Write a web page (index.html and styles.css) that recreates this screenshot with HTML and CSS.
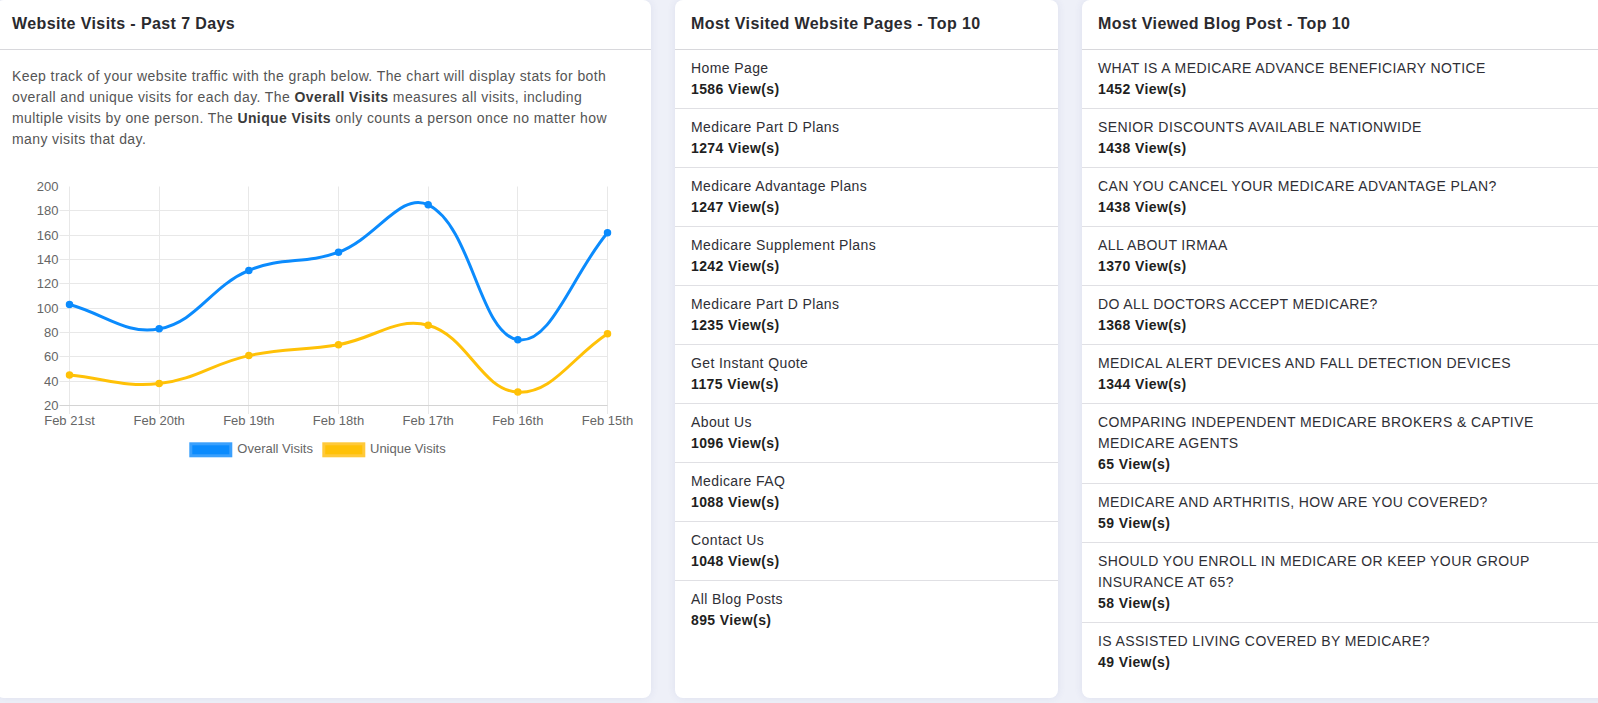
FILE: index.html
```html
<!DOCTYPE html>
<html lang="en">
<head>
<meta charset="utf-8">
<title>Website Stats</title>
<link rel="stylesheet" href="styles.css">
</head>
<body>
<div class="dashboard">
  <section class="card card-visits">
    <header class="card-head"><h2>Website Visits - Past 7 Days</h2></header>
    <div class="card-body">
      <p class="intro">Keep track of your website traffic with the graph below. The chart will display stats for both overall and unique visits for each day. The <strong>Overall Visits</strong> measures all visits, including multiple visits by one person. The <strong>Unique Visits</strong> only counts a person once no matter how many visits that day.</p>
      <svg class="chart" viewBox="0 0 623 310" width="623" height="310" data-overall="103,83,131,146,185,74,162" data-unique="45,38,61,70,86,31,79">
        <g class="grid">
          <line x1="47.5" y1="50.5" x2="595.5" y2="50.5"/>
          <line x1="47.5" y1="75.5" x2="595.5" y2="75.5"/>
          <line x1="47.5" y1="99.5" x2="595.5" y2="99.5"/>
          <line x1="47.5" y1="123.5" x2="595.5" y2="123.5"/>
          <line x1="47.5" y1="148.5" x2="595.5" y2="148.5"/>
          <line x1="47.5" y1="172.5" x2="595.5" y2="172.5"/>
          <line x1="47.5" y1="196.5" x2="595.5" y2="196.5"/>
          <line x1="47.5" y1="221.5" x2="595.5" y2="221.5"/>
          <line x1="57.5" y1="26.5" x2="57.5" y2="254"/>
          <line x1="147.5" y1="26.5" x2="147.5" y2="254"/>
          <line x1="236.5" y1="26.5" x2="236.5" y2="254"/>
          <line x1="326.5" y1="26.5" x2="326.5" y2="254"/>
          <line x1="416.5" y1="26.5" x2="416.5" y2="254"/>
          <line x1="505.5" y1="26.5" x2="505.5" y2="254"/>
          <line x1="595.5" y1="26.5" x2="595.5" y2="254"/>
        </g>
        <line class="axis" x1="47.5" y1="245.5" x2="595.5" y2="245.5"/>
        <g class="tick-label" text-anchor="end">
          <text x="46.5" y="31">200</text>
          <text x="46.5" y="55">180</text>
          <text x="46.5" y="80">160</text>
          <text x="46.5" y="104">140</text>
          <text x="46.5" y="128">120</text>
          <text x="46.5" y="153">100</text>
          <text x="46.5" y="177">80</text>
          <text x="46.5" y="201">60</text>
          <text x="46.5" y="226">40</text>
          <text x="46.5" y="250">20</text>
        </g>
        <g class="tick-label" text-anchor="middle">
          <text x="57.5" y="265">Feb 21st</text>
          <text x="147.2" y="265">Feb 20th</text>
          <text x="236.8" y="265">Feb 19th</text>
          <text x="326.5" y="265">Feb 18th</text>
          <text x="416.2" y="265">Feb 17th</text>
          <text x="505.8" y="265">Feb 16th</text>
          <text x="595.5" y="265">Feb 15th</text>
        </g>
        <path class="series series-unique" data-key="unique" d=""/>
        <g class="dots dots-unique"></g>
        <path class="series series-overall" data-key="overall" d=""/>
        <g class="dots dots-overall"></g>
        <g class="legend">
          <rect class="swatch swatch-overall" x="178.8" y="283.8" width="40" height="12"/>
          <text class="tick-label" x="225.3" y="293.3">Overall Visits</text>
          <rect class="swatch swatch-unique" x="311.8" y="283.8" width="40" height="12"/>
          <text class="tick-label" x="358" y="293.3">Unique Visits</text>
        </g>
      </svg>
    </div>
  </section>

  <section class="card card-pages">
    <header class="card-head"><h2>Most Visited Website Pages - Top 10</h2></header>
    <ul class="stat-list">
      <li><span class="stat-name">Home Page</span><span class="stat-views">1586 View(s)</span></li>
      <li><span class="stat-name">Medicare Part D Plans</span><span class="stat-views">1274 View(s)</span></li>
      <li><span class="stat-name">Medicare Advantage Plans</span><span class="stat-views">1247 View(s)</span></li>
      <li><span class="stat-name">Medicare Supplement Plans</span><span class="stat-views">1242 View(s)</span></li>
      <li><span class="stat-name">Medicare Part D Plans</span><span class="stat-views">1235 View(s)</span></li>
      <li><span class="stat-name">Get Instant Quote</span><span class="stat-views">1175 View(s)</span></li>
      <li><span class="stat-name">About Us</span><span class="stat-views">1096 View(s)</span></li>
      <li><span class="stat-name">Medicare FAQ</span><span class="stat-views">1088 View(s)</span></li>
      <li><span class="stat-name">Contact Us</span><span class="stat-views">1048 View(s)</span></li>
      <li><span class="stat-name">All Blog Posts</span><span class="stat-views">895 View(s)</span></li>
    </ul>
  </section>

  <section class="card card-blog">
    <header class="card-head"><h2>Most Viewed Blog Post - Top 10</h2></header>
    <ul class="stat-list">
      <li><span class="stat-name">WHAT IS A MEDICARE ADVANCE BENEFICIARY NOTICE</span><span class="stat-views">1452 View(s)</span></li>
      <li><span class="stat-name">SENIOR DISCOUNTS AVAILABLE NATIONWIDE</span><span class="stat-views">1438 View(s)</span></li>
      <li><span class="stat-name">CAN YOU CANCEL YOUR MEDICARE ADVANTAGE PLAN?</span><span class="stat-views">1438 View(s)</span></li>
      <li><span class="stat-name">ALL ABOUT IRMAA</span><span class="stat-views">1370 View(s)</span></li>
      <li><span class="stat-name">DO ALL DOCTORS ACCEPT MEDICARE?</span><span class="stat-views">1368 View(s)</span></li>
      <li><span class="stat-name">MEDICAL ALERT DEVICES AND FALL DETECTION DEVICES</span><span class="stat-views">1344 View(s)</span></li>
      <li><span class="stat-name">COMPARING INDEPENDENT MEDICARE BROKERS &amp; CAPTIVE MEDICARE AGENTS</span><span class="stat-views">65 View(s)</span></li>
      <li><span class="stat-name">MEDICARE AND ARTHRITIS, HOW ARE YOU COVERED?</span><span class="stat-views">59 View(s)</span></li>
      <li><span class="stat-name">SHOULD YOU ENROLL IN MEDICARE OR KEEP YOUR GROUP INSURANCE AT 65?</span><span class="stat-views">58 View(s)</span></li>
      <li><span class="stat-name">IS ASSISTED LIVING COVERED BY MEDICARE?</span><span class="stat-views">49 View(s)</span></li>
    </ul>
  </section>
</div>
<script src="script.js"></script>
</body>
</html>
```

FILE: styles.css
```css
* {
  box-sizing: border-box;
}

html,
body {
  margin: 0;
  padding: 0;
}

body {
  width: 1598px;
  height: 703px;
  overflow: hidden;
  background: #eef0f8;
  font-family: "Liberation Sans", Arial, sans-serif;
  letter-spacing: 0.025em;
  color: #333;
}

.dashboard {
  display: flex;
  align-items: stretch;
  gap: 24px;
  height: 698px;
  margin-left: -4px;
}

.card {
  flex: none;
  background: #fff;
  border-radius: 8px;
  box-shadow: 0 0 8px rgba(60, 70, 140, 0.09);
  overflow: hidden;
}

.card-visits {
  width: 655px;
}

.card-pages {
  width: 383px;
}

.card-blog {
  width: 536px;
}

.card-head {
  padding: 12px 16px 13px;
  border-bottom: 1px solid #d8d8dc;
}

.card-head h2 {
  margin: 0;
  font-size: 16px;
  line-height: 24px;
  font-weight: bold;
  color: #2a2a2e;
}

.card-body {
  padding: 16px 16px 0;
}

.intro {
  margin: 0 0 10px;
  font-size: 14px;
  line-height: 21px;
  color: #555;
}

.intro strong {
  color: #3a3a3a;
}

.chart {
  display: block;
  width: 623px;
  height: 310px;
  overflow: visible;
}

.grid line {
  stroke: #e8e8e8;
  stroke-width: 1;
}

.axis {
  stroke: #d4d4d4;
  stroke-width: 1;
}

.tick-label {
  font-family: "Liberation Sans", Arial, sans-serif;
  font-size: 13px;
  letter-spacing: 0;
  fill: #666;
}

.series {
  fill: none;
  stroke-width: 3;
  stroke-linejoin: round;
}

.series-overall {
  stroke: #0b8bfd;
}

.series-unique {
  stroke: #ffc107;
}

.dots-overall circle {
  fill: #0b8bfd;
  stroke: #0b8bfd;
}

.dots-unique circle {
  fill: #ffc107;
  stroke: #ffc107;
}

.swatch {
  stroke-width: 3;
}

.swatch-overall {
  fill: #0b8bfd;
  stroke: #3aa0fd;
}

.swatch-unique {
  fill: #ffc107;
  stroke: #ffc93a;
}

.stat-list {
  list-style: none;
  margin: 0;
  padding: 0;
}

.stat-list li {
  padding: 8px 16px;
  border-bottom: 1px solid #e0e0e4;
  font-size: 14px;
  line-height: 21px;
}

.stat-list li:last-child {
  border-bottom: none;
}

.stat-name {
  display: block;
  color: #2f2f36;
}

.stat-views {
  display: block;
  font-weight: bold;
  color: #1f1f22;
}
```

FILE: script.js
```js
(function () {
  var svg = document.querySelector('.chart');
  if (!svg) return;
  var NS = 'http://www.w3.org/2000/svg';
  var x0 = 57.5, step = 89.667;
  var top = 26.5, bottom = 245.5, left = 57.5, right = 595.5;
  var min = 20, max = 200, tension = 0.4;

  function X(i) { return x0 + i * step; }
  function Y(v) { return bottom - (v - min) * (bottom - top) / (max - min); }
  function clamp(v, a, b) { return Math.max(a, Math.min(b, v)); }

  function build(key) {
    var values = svg.getAttribute('data-' + key).split(',').map(Number);
    var pts = values.map(function (v, i) { return { x: X(i), y: Y(v) }; });
    pts.forEach(function (p, i) {
      var prev = pts[i - 1] || p;
      var next = pts[i + 1] || p;
      var d01 = Math.hypot(p.x - prev.x, p.y - prev.y);
      var d12 = Math.hypot(next.x - p.x, next.y - p.y);
      var s01 = d01 / (d01 + d12); if (isNaN(s01)) s01 = 0;
      var s12 = d12 / (d01 + d12); if (isNaN(s12)) s12 = 0;
      var fa = tension * s01, fb = tension * s12;
      p.cp1 = {
        x: clamp(p.x - fa * (next.x - prev.x), left, right),
        y: clamp(p.y - fa * (next.y - prev.y), top, bottom)
      };
      p.cp2 = {
        x: clamp(p.x + fb * (next.x - prev.x), left, right),
        y: clamp(p.y + fb * (next.y - prev.y), top, bottom)
      };
    });
    var d = 'M' + pts[0].x.toFixed(2) + ' ' + pts[0].y.toFixed(2);
    for (var i = 1; i < pts.length; i++) {
      var a = pts[i - 1], b = pts[i];
      d += ' C' + a.cp2.x.toFixed(2) + ' ' + a.cp2.y.toFixed(2) + ' ' +
        b.cp1.x.toFixed(2) + ' ' + b.cp1.y.toFixed(2) + ' ' +
        b.x.toFixed(2) + ' ' + b.y.toFixed(2);
    }
    svg.querySelector('.series-' + key).setAttribute('d', d);
    var g = svg.querySelector('.dots-' + key);
    pts.forEach(function (p) {
      var c = document.createElementNS(NS, 'circle');
      c.setAttribute('cx', p.x.toFixed(2));
      c.setAttribute('cy', p.y.toFixed(2));
      c.setAttribute('r', '3');
      c.setAttribute('stroke-width', '1.5');
      g.appendChild(c);
    });
  }

  build('unique');
  build('overall');
})();
```
